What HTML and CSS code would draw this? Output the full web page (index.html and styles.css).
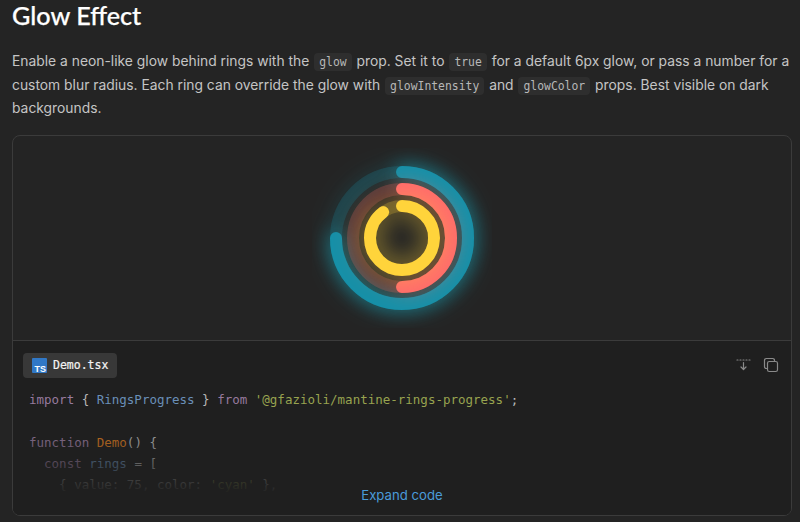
FILE: index.html
```html
<!DOCTYPE html>
<html lang="en">
<head>
  <meta charset="UTF-8" />
  <meta name="viewport" content="width=device-width, initial-scale=1.0" />
  <title>Glow Effect</title>
  <link rel="stylesheet" href="styles.css">
</head>
<body>
  <h2 class="title">Glow Effect</h2>
  <p class="intro">
    Enable a neon-like glow behind rings with the <code>glow</code> prop. Set it to <code>true</code> for a default 6px glow, or pass a number for a custom blur radius. Each ring can override the glow with <code>glowIntensity</code> and <code>glowColor</code> props. Best visible on dark backgrounds.
  </p>

  <div class="demo">
    <div class="preview">
      <svg class="rings" width="180" height="180" viewBox="0 0 180 180">
        <g class="ring ring-cyan">
          <circle class="track" cx="90" cy="90" r="66" />
          <circle class="value" cx="90" cy="90" r="66" pathLength="100" stroke-dasharray="75 100" />
        </g>
        <g class="ring ring-red">
          <circle class="track" cx="90" cy="90" r="49" />
          <circle class="value" cx="90" cy="90" r="49" pathLength="100" stroke-dasharray="50 100" />
        </g>
        <g class="ring ring-yellow">
          <circle class="track" cx="90" cy="90" r="32" />
          <circle class="value" cx="90" cy="90" r="32" pathLength="100" stroke-dasharray="90 100" />
        </g>
      </svg>
    </div>

    <div class="code-panel">
      <div class="code-head">
        <div class="file-tab">
          <svg class="ts-icon" width="15" height="15" viewBox="0 0 15 15">
            <rect width="15" height="15" rx="1" fill="#3178c6" />
            <text x="14" y="13.5" text-anchor="end">TS</text>
          </svg>
          <span>Demo.tsx</span>
        </div>
        <div class="code-actions">
          <svg width="16" height="16" viewBox="0 0 16 16" fill="none" stroke="#8a8a8a" stroke-width="1.2" stroke-linecap="round" stroke-linejoin="round">
            <path d="M2 3h1M5 3h1M8 3h1M11 3h1M14 3h1" />
            <path d="M8.5 5.5v7M6 10l2.5 2.5 2.5-2.5" />
          </svg>
          <svg width="16" height="16" viewBox="0 0 16 16" fill="none" stroke="#8a8a8a" stroke-width="1.2" stroke-linecap="round" stroke-linejoin="round">
            <rect x="4.5" y="4.5" width="10" height="10" rx="1.8" />
            <path d="M11.5 4.5v-1.2a1.8 1.8 0 0 0-1.8-1.8h-6.4a1.8 1.8 0 0 0-1.8 1.8v6.4a1.8 1.8 0 0 0 1.8 1.8h1.2" />
          </svg>
        </div>
      </div>
      <pre class="code"><span class="kw">import</span> { <span class="name">RingsProgress</span> } <span class="kw">from</span> <span class="str">'@gfazioli/mantine-rings-progress'</span>;

<span class="kw">function</span> <span class="fn">Demo</span>() {
  <span class="kw">const</span> <span class="name">rings</span> = [
    { value: 75, color: <span class="str">'cyan'</span> },</pre>
      <div class="fade"></div>
      <a class="expand" href="#">Expand code</a>
    </div>
  </div>
</body>
</html>
```

FILE: styles.css
```css
* {
  margin: 0;
  padding: 0;
  box-sizing: border-box;
}

html, body {
  height: 522px;
  overflow: hidden;
}

body {
  font-family: 'Inter', sans-serif;
  background-color: #242424;
  color: #c4c4c4;
  padding: 0 8px 0 12px;
}

.title {
  font-family: 'Lato', sans-serif;
  font-size: 25.2px;
  font-weight: 500;
  line-height: 30px;
  color: #fff;
  -webkit-text-stroke: 0.25px #fff;
}

.intro {
  margin-top: 20px;
  font-size: 13.85px;
  line-height: 23.6px;
}

code {
  font-family: 'DejaVu Sans Mono', monospace;
  font-size: 11.4px;
  line-height: 1;
  background: #2e2e2e;
  border-radius: 4px;
  padding: 2px 5px;
  margin: 0 1px;
  color: #b8b8b8;
}

.demo {
  margin-top: 14px;
  height: 381px;
  border: 1px solid #3b3b3b;
  border-radius: 8px;
  overflow: hidden;
}

.preview {
  height: 205px;
  display: flex;
  justify-content: center;
  align-items: center;
  border-bottom: 1px solid #3b3b3b;
}

.rings {
  transform: rotate(-90deg);
  filter: blur(0.4px);
}

.ring circle {
  fill: none;
  stroke-width: 12;
  stroke-linecap: round;
}

.ring .track {
  opacity: 0.22;
}

.ring-cyan {
  stroke: #1690a8;
  filter: drop-shadow(0 0 10px rgba(21, 170, 191, 0.9));
}

.ring-red {
  stroke: #ff6b6b;
  filter: drop-shadow(0 0 10px rgba(255, 107, 107, 0.45));
}

.ring-yellow {
  stroke: #ffd43b;
  filter: drop-shadow(0 0 12px rgba(255, 212, 59, 0.65));
}

.code-panel {
  position: relative;
  height: 174px;
  background: #1f1f1f;
  padding: 12px 10px 0;
}

.code-head {
  display: flex;
  justify-content: space-between;
  align-items: center;
}

.file-tab {
  display: flex;
  align-items: center;
  gap: 6px;
  height: 25px;
  padding: 0 9px;
  background: #383838;
  border-radius: 4px;
  font-family: 'DejaVu Sans Mono', monospace;
  font-size: 11.5px;
  color: #f4f4f4;
  -webkit-text-stroke: 0.2px #f4f4f4;
}

.ts-icon text {
  font-family: 'Liberation Sans', sans-serif;
  font-size: 9px;
  font-weight: 700;
  fill: #fff;
  stroke: none;
}

.code-actions {
  display: flex;
  gap: 12px;
  margin-right: 2px;
}

.code {
  margin: 11px 0 0 6px;
  font-family: 'DejaVu Sans Mono', monospace;
  font-size: 12.5px;
  line-height: 21.4px;
  color: #b8b8b8;
}

.kw { color: #977a9e; }
.name { color: #6a8fb8; }
.str { color: #98a34f; }
.fn { color: #d9791f; }

.fade {
  position: absolute;
  left: 0;
  right: 0;
  top: 80px;
  bottom: 0;
  background: linear-gradient(to bottom, rgba(31, 31, 31, 0), #1f1f1f 78%);
}

.expand {
  position: absolute;
  left: 0;
  right: 0;
  bottom: 12px;
  text-align: center;
  font-size: 13.2px;
  color: #4a9bd9;
  text-decoration: none;
}
```
